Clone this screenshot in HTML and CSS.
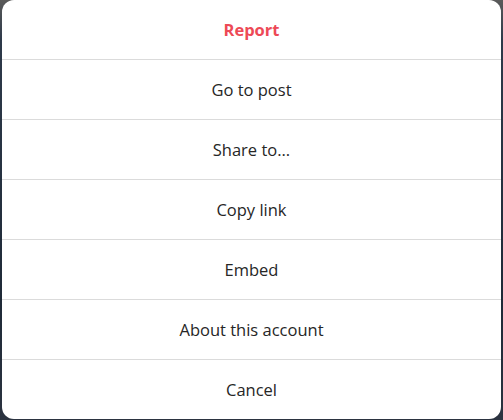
FILE: index.html
```html
<!DOCTYPE html>
<html lang="en">
<head>
<meta charset="utf-8">
<title>Post options</title>
<link rel="stylesheet" href="styles.css">
</head>
<body>
<div class="backdrop">
  <div class="dialog">
    <button class="item danger">Report</button>
    <button class="item">Go to post</button>
    <button class="item">Share to...</button>
    <button class="item">Copy link</button>
    <button class="item">Embed</button>
    <button class="item">About this account</button>
    <button class="item">Cancel</button>
  </div>
</div>
</body>
</html>
```

FILE: styles.css
```css
html, body {
  margin: 0;
  padding: 0;
}
body {
  width: 503px;
  height: 420px;
  overflow: hidden;
  background: #4f4f4f;
}
.backdrop {
  height: 420px;
  padding: 0 2px 0 2px;
  box-sizing: border-box;
  background: linear-gradient(180deg, #5a5a5a 0px, #2e3a4a 40px, #1f2a38 300px, #2b3340 420px);
}
.dialog {
  background: #fff;
  border-radius: 12px;
  height: 419px;
  display: flex;
  flex-direction: column;
  overflow: hidden;
}
.item {
  height: 60px;
  flex: none;
  border: 0;
  border-top: 1px solid #dbdbdb;
  background: transparent;
  font-family: "Open Sans", sans-serif;
  font-size: 16.5px;
  color: #262626;
  padding: 0;
  margin: 0;
  text-align: center;
}
.item:first-child {
  border-top: 0;
  height: 59px;
}
.danger {
  color: #ed4956;
  font-weight: 700;
}
```
